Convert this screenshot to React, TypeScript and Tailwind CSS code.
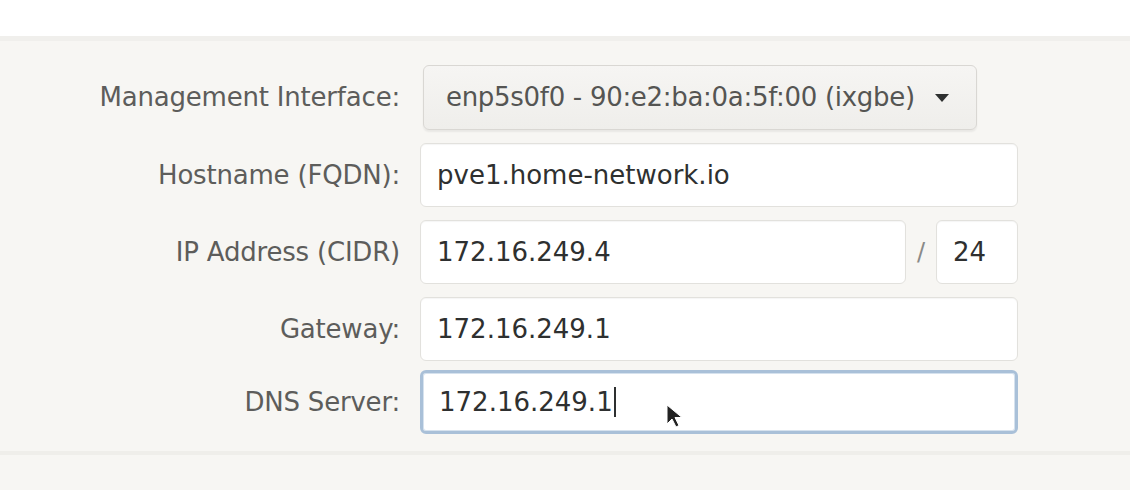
import React from 'react';

const font = { fontFamily: '"DejaVu Sans", "Liberation Sans", sans-serif' };

const Label: React.FC<{ children: React.ReactNode; className?: string }> = ({ children, className = '' }) => (
  <div className={`flex items-center justify-end text-[26px] text-[#5d5d5b] tracking-[-0.2px] ${className}`}>{children}</div>
);

const TextField: React.FC<{ value: string; className?: string; focused?: boolean; caret?: boolean }> = ({
  value,
  className = '',
  focused,
  caret,
}) => (
  <div
    className={`h-[64px] flex items-center pl-[16px] bg-white rounded-[6px] text-[26px] text-[#2e3030] ${
      focused
        ? 'border-[3px] border-[#a9c0d8] pl-[14px] shadow-[inset_0_0_0_1px_#d6e2ee]'
        : 'border border-[#e2e1dd] shadow-[inset_0_1px_1px_rgba(0,0,0,0.04)]'
    } ${className}`}
  >
    <span>{value}</span>
    {caret && <span className="w-[2px] h-[30px] bg-[#2e3030] ml-[1px]" />}
  </div>
);

export default function App() {
  return (
    <div className="w-[1130px] h-[490px] bg-[#f7f6f3] overflow-hidden relative" style={font}>
      {/* top strip */}
      <div className="h-[36px] bg-white" />
      <div className="h-[5px] bg-[#f0efec]" />

      {/* form panel */}
      <div className="h-[414px] border-b-[4px] border-[#efeeea] pt-[24px]">
        <div className="grid grid-cols-[400px_598px] gap-x-[20px] gap-y-[13px]">
          <Label>Management Interface:</Label>
          <div className="ml-[3px] w-[554px] h-[65px] flex items-center justify-between pl-[22px] pr-[26px] rounded-[6px] border border-[#d9d7d3] bg-gradient-to-b from-[#f6f5f3] to-[#efeeeb] shadow-[0_2px_2px_rgba(0,0,0,0.06)] text-[26px] text-[#555553]">
            <span className="tracking-[-0.3px]">enp5s0f0 - 90:e2:ba:0a:5f:00 (ixgbe)</span>
            <svg width="16" height="10" viewBox="0 0 16 10">
              <path d="M1 1h14L8 9z" fill="#2e3030" />
            </svg>
          </div>

          <Label>Hostname (FQDN):</Label>
          <TextField value="pve1.home-network.io" />

          <Label>IP Address (CIDR)</Label>
          <div className="flex items-center">
            <TextField value="172.16.249.4" className="w-[486px]" />
            <span className="w-[30px] text-center text-[24px] text-[#8a8a88]">/</span>
            <TextField value="24" className="w-[82px]" />
          </div>

          <Label>Gateway:</Label>
          <TextField value="172.16.249.1" />

          <Label className="-mt-[4px]">DNS Server:</Label>
          <TextField value="172.16.249.1" focused caret className="-mt-[4px] pl-[13px]" />
        </div>
      </div>

      {/* mouse pointer */}
      <svg className="absolute left-[666px] top-[404px]" width="16" height="24" viewBox="0 0 16 24">
        <path d="M1 1v19l5-5 4 8 3-1.5-4-8h7z" fill="#222" stroke="#fff" strokeWidth="1" />
      </svg>
    </div>
  );
}
